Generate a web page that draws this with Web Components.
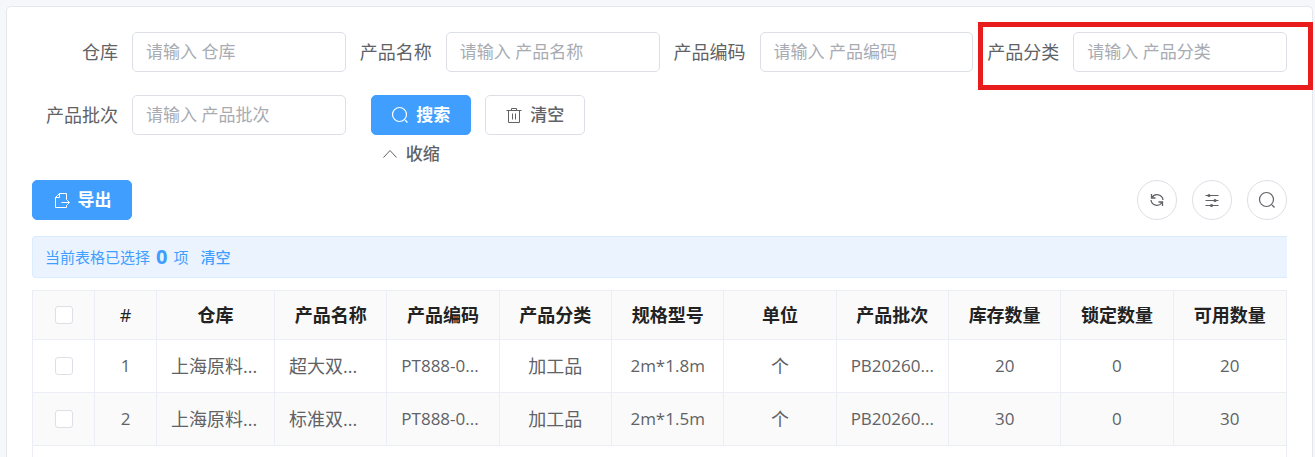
<!DOCTYPE html>
<html lang="zh-CN">
<head>
<meta charset="utf-8">
<title>库存查询</title>
<style>
    :root {
        --primary: #409eff;
        --text: #606266;
        --heading: #222222;
        --placeholder: #a8abb2;
        --border: #dcdfe6;
        --line: #ebeef5;
    }
    body {
        margin: 0;
        height: 100vh;
        overflow: hidden;
        display: flex;
        flex-direction: column;
        background: #f5f7fa;
        color: var(--text);
        font-family: "Open Sans", "Noto Sans CJK SC", sans-serif;
        font-size: 18px;
    }
</style>
</head>
<body>
<page-card>
    <search-form>
        <search-field label="仓库"></search-field>
        <search-field label="产品名称"></search-field>
        <search-field label="产品编码"></search-field>
        <search-field label="产品分类" marked></search-field>
        <search-field label="产品批次"></search-field>
        <search-actions></search-actions>
    </search-form>
    <tool-bar>
        <ui-button type="primary" icon="export">导出</ui-button>
        <ui-button slot="right" type="round" icon="refresh" label="刷新"></ui-button>
        <ui-button slot="right" type="round" icon="operation" label="列设置"></ui-button>
        <ui-button slot="right" type="round" icon="search" label="搜索"></ui-button>
    </tool-bar>
    <selection-tip count="0"></selection-tip>
    <stock-table></stock-table>
</page-card>

<script>
// all icons are drawn on an 18 x 18 grid
const icons = {
    search: '<circle cx="8.5" cy="8.5" r="7" stroke-width="1.2"/><path d="M14 14l2.500 2.500" stroke-width="1.2"/>',
    trash: '<path d="M1.500 4.500h15M6.500 4.500v-2h5v2M3.500 4.500v12h11v-12M7.500 7.500v6M10.500 7.500v6"/>',
    up: '<path d="M2.500 12.500l6.500-7 6.500 7"/>',
    export: '<path d="M6 2.500h7.500v6M2.500 6v10.500h11v-2M2.500 6.500h4v-4zM8.500 11.500h7.500M13.500 8.500l3 3-3 3"/>',
    refresh: '<path d="M3.500 3v4h4M4 6.500a6 6 0 0 1 11 2.500M14.500 15v-4h-4M14 11.500a6 6 0 0 1-11-2.500" stroke-width="1.300"/>',
    operation: '<path d="M2.500 4.500h13M2.500 9.500h13M2.500 14.500h13" stroke-width="1.200"/><g fill="currentColor" stroke="none"><circle cx="6" cy="4.500" r="1.600"/><circle cx="12" cy="9.500" r="1.600"/><circle cx="8.500" cy="14.500" r="1.600"/></g>'
};

function svg(name) {
    return `<svg viewBox="0 0 18 18" width="18" height="18" fill="none" stroke="currentColor" aria-hidden="true">${icons[name]}</svg>`;
}

class PageCard extends HTMLElement {
    constructor() {
        super();
        this.attachShadow({ mode: 'open' });
        this.shadowRoot.innerHTML = `
            <style>
                :host {
                    display: flex;
                    flex-direction: column;
                    flex: 1;
                    margin: 6px 2px 0 6px;
                    padding: 25px 25px 0;
                    background: white;
                    border: 1px solid #e4e7ed;
                    border-bottom: 0;
                    border-radius: 5px 5px 0 0;
                }
            </style>
            <slot></slot>`;
    }
}
customElements.define('page-card', PageCard);

class SearchForm extends HTMLElement {
    constructor() {
        super();
        this.attachShadow({ mode: 'open' });
        this.shadowRoot.innerHTML = `
            <style>
                :host {
                    display: grid;
                    grid-template-columns: repeat(4, minmax(0, 1fr));
                    align-items: start;
                    row-gap: 23px;
                }
            </style>
            <slot></slot>`;
    }
}
customElements.define('search-form', SearchForm);

class SearchField extends HTMLElement {
    constructor() {
        super();
        this.attachShadow({ mode: 'open' });
    }

    connectedCallback() {
        const label = this.getAttribute('label');
        this.shadowRoot.innerHTML = `
            <style>
                :host {
                    display: flex;
                    align-items: center;
                    position: relative;
                }
                label {
                    flex: none;
                    width: 100px;
                    padding-right: 14px;
                    box-sizing: border-box;
                    text-align: right;
                    line-height: 40px;
                    white-space: nowrap;
                }
                input {
                    flex: 1;
                    min-width: 0;
                    height: 40px;
                    box-sizing: border-box;
                    padding: 0 13px 2px;
                    border: 1px solid var(--border);
                    border-radius: 5px;
                    background: white;
                    color: var(--text);
                    font-family: inherit;
                    font-size: 17px;
                    outline: none;
                }
                input:focus {
                    border-color: var(--primary);
                }
                input::placeholder {
                    color: var(--placeholder);
                }
                /* red frame that points the field out */
                :host([marked])::after {
                    content: "";
                    position: absolute;
                    top: -10px;
                    right: -26px;
                    bottom: -18px;
                    left: 5px;
                    border: 5px solid #e81c1c;
                    pointer-events: none;
                }
            </style>
            <label for="input">${label}</label>
            <input id="input" type="text" placeholder="请输入 ${label}">`;
    }
}
customElements.define('search-field', SearchField);

class UiButton extends HTMLElement {
    constructor() {
        super();
        this.attachShadow({ mode: 'open' });
    }

    connectedCallback() {
        const label = this.getAttribute('label');
        this.shadowRoot.innerHTML = `
            <style>
                :host {
                    display: block;
                }
                button {
                    display: flex;
                    align-items: center;
                    justify-content: center;
                    gap: 7px;
                    height: 40px;
                    min-width: 100px;
                    box-sizing: border-box;
                    padding: 0 19px;
                    border: 1px solid var(--border);
                    border-radius: 5px;
                    background: white;
                    color: var(--text);
                    font-family: inherit;
                    font-size: 17px;
                    font-weight: 500;
                    line-height: 24px;
                    white-space: nowrap;
                    cursor: pointer;
                }
                :host([type="primary"]) button {
                    background: var(--primary);
                    border-color: var(--primary);
                    color: white;
                    font-weight: 700;
                }
                :host([type="round"]) button {
                    width: 40px;
                    min-width: 40px;
                    padding: 0;
                    border-radius: 50%;
                }
                :host([type="text"]) button {
                    height: 38px;
                    min-width: 0;
                    padding: 0 10px;
                    border: 0;
                    background: none;
                }
            </style>
            <button type="button" ${label ? `aria-label="${label}"` : ''}>
                ${svg(this.getAttribute('icon'))}
                ${label ? '' : '<span><slot></slot></span>'}
            </button>`;
    }
}
customElements.define('ui-button', UiButton);

class SearchActions extends HTMLElement {
    constructor() {
        super();
        this.attachShadow({ mode: 'open' });
        this.shadowRoot.innerHTML = `
            <style>
                :host {
                    display: flex;
                    flex-direction: column;
                    align-items: flex-start;
                    padding-left: 25px;
                }
                div {
                    display: flex;
                    gap: 14px;
                }
            </style>
            <div>
                <ui-button type="primary" icon="search">搜索</ui-button>
                <ui-button icon="trash">清空</ui-button>
            </div>
            <ui-button type="text" icon="up">收缩</ui-button>`;
    }
}
customElements.define('search-actions', SearchActions);

class ToolBar extends HTMLElement {
    constructor() {
        super();
        this.attachShadow({ mode: 'open' });
        this.shadowRoot.innerHTML = `
            <style>
                :host {
                    display: flex;
                    justify-content: space-between;
                    margin: 7px 0 16px;
                }
                div {
                    display: flex;
                    gap: 15px;
                }
            </style>
            <div><slot></slot></div>
            <div><slot name="right"></slot></div>`;
    }
}
customElements.define('tool-bar', ToolBar);

class SelectionTip extends HTMLElement {
    constructor() {
        super();
        this.attachShadow({ mode: 'open' });
    }

    connectedCallback() {
        this.shadowRoot.innerHTML = `
            <style>
                :host {
                    display: flex;
                    align-items: center;
                    height: 42px;
                    box-sizing: border-box;
                    margin-bottom: 12px;
                    padding: 0 12px;
                    border: 1px solid #d9ecff;
                    border-right: 0;
                    border-radius: 4px 0 0 4px;
                    background: #ebf3ff;
                    color: var(--primary);
                    font-size: 15px;
                    line-height: 24px;
                }
                b {
                    margin: 0 6px;
                    font-size: 20px;
                }
                button {
                    margin-left: 12px;
                    padding: 0;
                    border: 0;
                    background: none;
                    color: inherit;
                    font: inherit;
                    font-weight: 500;
                    cursor: pointer;
                }
            </style>
            <span>当前表格已选择</span>
            <b>${this.getAttribute('count')}</b>
            <span>项</span>
            <button type="button">清空</button>`;
    }
}
customElements.define('selection-tip', SelectionTip);

const columns = ['#', '仓库', '产品名称', '产品编码', '产品分类', '规格型号', '单位', '产品批次', '库存数量', '锁定数量', '可用数量'];
const rows = [
    ['1', '上海原料...', '超大双...', 'PT888-0...', '加工品', '2m*1.8m', '个', 'PB20260...', '20', '0', '20'],
    ['2', '上海原料...', '标准双...', 'PT888-0...', '加工品', '2m*1.5m', '个', 'PB20260...', '30', '0', '30']
];

function cell(text) {
    const names = [];
    if (text.endsWith('...')) names.push('cut');
    if (/^[\x20-\x7e]+$/.test(text)) names.push('latin');
    return `<td class="${names.join(' ')}">${text}</td>`;
}

class StockTable extends HTMLElement {
    constructor() {
        super();
        this.attachShadow({ mode: 'open' });
        this.shadowRoot.innerHTML = `
            <style>
                :host {
                    display: block;
                    flex: 1;
                    border: 1px solid var(--line);
                    border-bottom: 0;
                }
                table {
                    width: 100%;
                    table-layout: fixed;
                    border-collapse: separate;
                    border-spacing: 0;
                }
                .narrow {
                    width: 62px;
                }
                .wide {
                    width: 118px;
                }
                th, td {
                    box-sizing: border-box;
                    padding: 0 14px;
                    border-right: 1px solid var(--line);
                    border-bottom: 1px solid var(--line);
                    text-align: center;
                    line-height: 24px;
                    white-space: nowrap;
                }
                th:last-child, td:last-child {
                    border-right: 0;
                }
                th {
                    height: 49px;
                    background: #fafafa;
                    color: var(--heading);
                    font-weight: 700;
                }
                th.index {
                    font-weight: 400;
                }
                td {
                    height: 53px;
                }
                td.cut {
                    text-align: left;
                }
                td.latin {
                    font-size: 17px;
                }
                tbody tr:nth-child(even) {
                    background: #fafafa;
                }
                input {
                    appearance: none;
                    display: block;
                    width: 18px;
                    height: 18px;
                    margin: 0 auto;
                    border: 1px solid var(--border);
                    border-radius: 3px;
                    background: white;
                }
                input:checked {
                    background: var(--primary);
                    border-color: var(--primary);
                }
            </style>
            <table>
                <colgroup>
                    <col class="narrow"><col class="narrow"><col class="wide">
                    <col span="9">
                </colgroup>
                <thead>
                    <tr>
                        <th><input type="checkbox" aria-label="全选"></th>
                        ${columns.map(name => `<th class="${name === '#' ? 'index' : ''}">${name}</th>`).join('')}
                    </tr>
                </thead>
                <tbody>
                    ${rows.map(row => `<tr>
                        <td><input type="checkbox" aria-label="选择第 ${row[0]} 行"></td>
                        ${row.map(cell).join('')}
                    </tr>`).join('')}
                </tbody>
            </table>`;
    }
}
customElements.define('stock-table', StockTable);
</script>
</body>
</html>
